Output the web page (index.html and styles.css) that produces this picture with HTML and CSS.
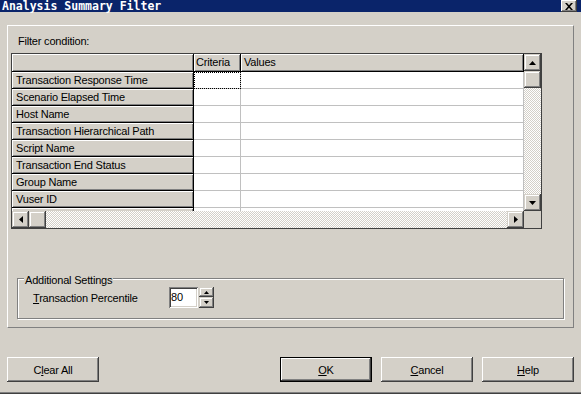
FILE: index.html
```html
<!DOCTYPE html>
<html lang="en">
<head>
  <meta charset="UTF-8">
  <title>Analysis Summary Filter</title>
  <link rel="stylesheet" href="styles.css">
</head>
<body>

  <div class="window">
    <!-- Title bar -->
    <div class="titlebar">
      <span class="title">Analysis Summary Filter</span>
      <span class="close-btn">
        <svg width="8" height="7" viewBox="0 0 8 7"><path d="M0 0h2l2 2.3L6 0h2L5 3.5 8 7H6L4 4.7 2 7H0l3-3.5z" /></svg>
      </span>
    </div>

    <div class="main">
      <div class="panel">
        <div class="label">Filter condition:</div>

        <!-- Filter grid -->
        <div class="grid">
          <div class="table">
            <div class="row head">
              <div class="cell fixed"></div>
              <div class="cell fixed criteria">Criteria</div>
              <div class="cell fixed values">Values</div>
            </div>
            <div class="row">
              <div class="cell fixed">Transaction Response Time</div>
              <div class="cell data criteria focus"></div>
              <div class="cell data values"></div>
            </div>
            <div class="row">
              <div class="cell fixed">Scenario Elapsed Time</div>
              <div class="cell data criteria"></div>
              <div class="cell data values"></div>
            </div>
            <div class="row">
              <div class="cell fixed">Host Name</div>
              <div class="cell data criteria"></div>
              <div class="cell data values"></div>
            </div>
            <div class="row">
              <div class="cell fixed">Transaction Hierarchical Path</div>
              <div class="cell data criteria"></div>
              <div class="cell data values"></div>
            </div>
            <div class="row">
              <div class="cell fixed">Script Name</div>
              <div class="cell data criteria"></div>
              <div class="cell data values"></div>
            </div>
            <div class="row">
              <div class="cell fixed">Transaction End Status</div>
              <div class="cell data criteria"></div>
              <div class="cell data values"></div>
            </div>
            <div class="row">
              <div class="cell fixed">Group Name</div>
              <div class="cell data criteria"></div>
              <div class="cell data values"></div>
            </div>
            <div class="row">
              <div class="cell fixed">Vuser ID</div>
              <div class="cell data criteria"></div>
              <div class="cell data values"></div>
            </div>
            <div class="row">
              <div class="cell fixed"></div>
              <div class="cell data criteria"></div>
              <div class="cell data values"></div>
            </div>
          </div>

          <div class="vscroll">
            <div class="sbtn"><svg width="7" height="4" viewBox="0 0 7 4"><path d="M3.5 0 7 4H0z" /></svg></div>
            <div class="sbtn"></div>
            <div class="track"></div>
            <div class="sbtn"><svg width="7" height="4" viewBox="0 0 7 4"><path d="M0 0h7L3.5 4z" /></svg></div>
          </div>
          <div class="hscroll">
            <div class="sbtn"><svg width="4" height="7" viewBox="0 0 4 7"><path d="M4 0v7L0 3.5z" /></svg></div>
            <div class="sbtn"></div>
            <div class="track"></div>
            <div class="sbtn"><svg width="4" height="7" viewBox="0 0 4 7"><path d="M0 0l4 3.5L0 7z" /></svg></div>
          </div>
          <div class="corner"></div>
        </div>

        <!-- Additional settings -->
        <fieldset class="settings">
          <legend>Additional Settings</legend>
          <div class="setting-row">
            <span class="setting-label"><u>T</u>ransaction Percentile</span>
            <div class="input">80</div>
            <div class="spin">
              <div class="spin-btn"><svg width="5" height="3" viewBox="0 0 5 3"><path d="M2.5 0 5 3H0z" /></svg></div>
              <div class="spin-btn"><svg width="5" height="3" viewBox="0 0 5 3"><path d="M0 0h5L2.5 3z" /></svg></div>
            </div>
          </div>
        </fieldset>
      </div>

      <div class="buttons">
        <button class="btn">C<u>l</u>ear All</button>
        <span class="spacer"></span>
        <button class="btn default"><u>O</u>K</button>
        <button class="btn"><u>C</u>ancel</button>
        <button class="btn"><u>H</u>elp</button>
      </div>
    </div>
  </div>

</body>
</html>
```

FILE: styles.css
```css
body {
  margin: 0;
  font-family: "Liberation Sans", Arial, sans-serif;
  font-size: 11px;
  letter-spacing: -0.2px;
  color: #000;
}

.window {
  width: 581px;
  height: 394px;
  box-sizing: border-box;
  background: #d4d0c8;
  border-bottom: 1px solid #404040;
  box-shadow: inset 0 -1px #808080;
}

.titlebar {
  height: 12px;
  background: #0a246a;
  display: flex;
  justify-content: space-between;
  align-items: flex-start;
  padding-left: 2px;
  padding-right: 4px;
}

.title {
  font-family: "DejaVu Sans Mono", "Liberation Mono", monospace;
  font-weight: bold;
  font-size: 11.5px;
  line-height: 12px;
  letter-spacing: 0;
  color: #fff;
}

.close-btn {
  width: 16px;
  height: 12px;
  box-sizing: border-box;
  background: #d4d0c8;
  box-shadow: inset -1px -1px #404040, inset 1px 1px #fff, inset -2px -2px #808080;
  display: flex;
  align-items: center;
  justify-content: center;
}

.main {
  padding: 13px 7px 0 7px;
}

.panel {
  height: 303px;
  box-sizing: border-box;
  border: 1px solid;
  border-color: #fff #808080 #808080 #fff;
  padding: 9px 3px 0 3px;
}

.label {
  line-height: 13px;
  margin: 0 0 5px 7px;
}

/* grid */
.grid {
  width: 531px;
  height: 176px;
  box-sizing: border-box;
  border: 1px solid #404040;
  display: grid;
  grid-template-columns: 512px 17px;
  grid-template-rows: 157px 17px;
}

.table {
  overflow: hidden;
  background: #fff;
}

.row {
  display: flex;
  height: 17px;
}

.row.head {
  height: 18px;
}

.cell {
  box-sizing: border-box;
  height: 100%;
  line-height: 16px;
  white-space: nowrap;
  overflow: hidden;
  flex: none;
}

.cell.fixed {
  width: 182px;
  background: #d4d0c8;
  border-right: 1px solid #000;
  border-bottom: 1px solid #000;
  box-shadow: inset 1px 1px #fff, inset -1px -1px #808080;
  padding-left: 4px;
}

.cell.criteria {
  width: 47px;
  padding-left: 2px;
}

.cell.values {
  width: 283px;
  padding-left: 3px;
}

.cell.data {
  background: #fff;
  border-right: 1px solid #c0c0c0;
  border-bottom: 1px solid #c0c0c0;
}

.cell.focus {
  outline: 1px dotted #000;
  outline-offset: -1px;
}

.vscroll, .hscroll {
  display: flex;
}

.vscroll {
  flex-direction: column;
}

.sbtn {
  width: 17px;
  height: 17px;
  flex: none;
  box-sizing: border-box;
  background: #d4d0c8;
  box-shadow: inset -1px -1px #404040, inset 1px 1px #d4d0c8, inset -2px -2px #808080, inset 2px 2px #fff;
  display: flex;
  align-items: center;
  justify-content: center;
}

.track {
  flex: 1;
  background: repeating-conic-gradient(#fff 0 25%, #d4d0c8 0 50%) 0 0 / 2px 2px;
}

.corner {
  background: #d4d0c8;
}

/* additional settings */
.settings {
  margin: 45px 0 0 6px;
  width: 547px;
  box-sizing: border-box;
  border: 1px solid #808080;
  box-shadow: 1px 1px 0 #fff, inset 1px 1px 0 #fff;
  padding: 4px 0 10px 15px;
  min-inline-size: 0;
}

.settings legend {
  height: 9px;
  line-height: 13px;
  padding: 0 1px;
  margin-left: -9px;
  background: #d4d0c8;
}

.setting-row {
  display: flex;
  align-items: center;
  height: 21px;
}

.setting-label {
  width: 136px;
}

.input {
  width: 29px;
  height: 21px;
  box-sizing: border-box;
  background: #fff;
  box-shadow: inset 1px 1px #808080, inset -1px -1px #fff, inset 2px 2px #404040, inset -2px -2px #d4d0c8;
  padding-left: 2px;
  line-height: 21px;
}

.spin {
  margin-left: 1px;
  display: flex;
  flex-direction: column;
  height: 21px;
}

.spin-btn {
  width: 15px;
  height: 10px;
  box-sizing: border-box;
  background: #d4d0c8;
  box-shadow: inset -1px -1px #404040, inset 1px 1px #d4d0c8, inset -2px -2px #808080, inset 2px 2px #fff;
  display: flex;
  align-items: center;
  justify-content: center;
}

.spin-btn + .spin-btn {
  height: 11px;
}

/* buttons */
.buttons {
  display: flex;
  gap: 9px;
  margin-top: 29px;
}

.spacer {
  flex: 1;
}

.btn {
  width: 92px;
  height: 25px;
  box-sizing: border-box;
  padding: 0;
  border: 0;
  background: #d4d0c8;
  box-shadow: inset -1px -1px #404040, inset 1px 1px #fff, inset -2px -2px #808080, inset 2px 2px #d4d0c8;
  font: inherit;
  letter-spacing: inherit;
  color: #000;
}

.btn.default {
  border: 1px solid #000;
}
```
